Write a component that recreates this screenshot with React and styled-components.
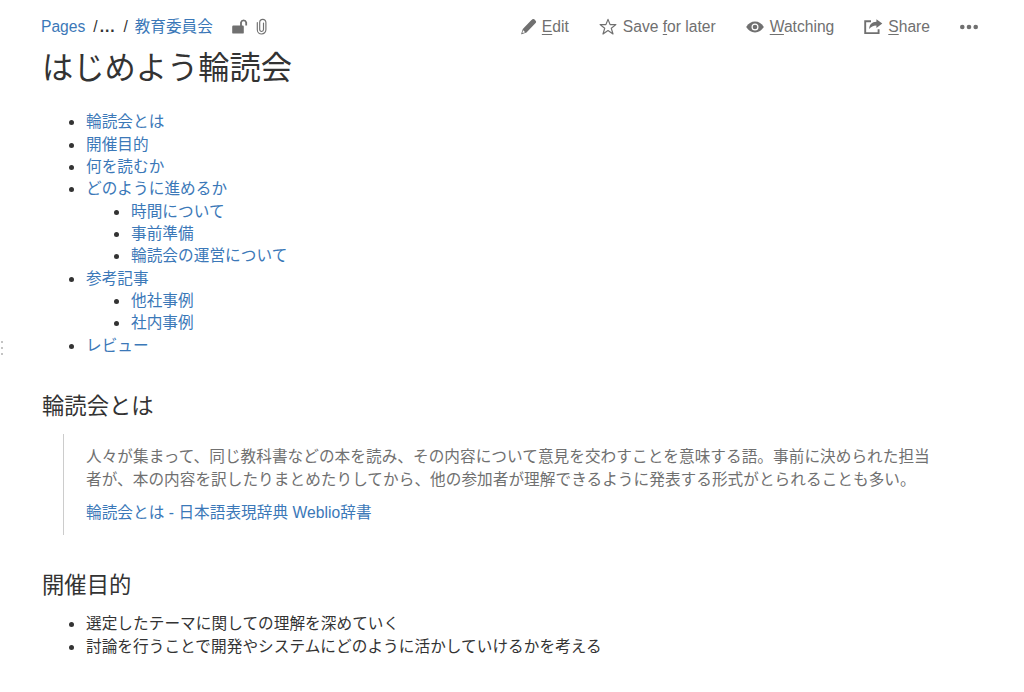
import styled, { createGlobalStyle } from 'styled-components';
import React from 'react';

const GlobalStyle = createGlobalStyle`
  body {
    margin: 0;
    background-color: #ffffff;
    color: #333333;
    font-family: "Liberation Sans", "Noto Sans CJK JP", sans-serif;
    font-size: 15.63px;
    line-height: 22.34px;
  }
`

const Page = styled.div`
  display: flex;
  height: 692px;
  overflow: hidden;
`

const SidebarHandle = styled.div`
  display: flex;
  flex-direction: column;
  justify-content: center;
  gap: 4px;
  width: 41px;
  padding-top: 4px;
  box-sizing: border-box;
  flex-shrink: 0;
`

const HandleDot = styled.span`
  width: 2px;
  height: 2px;
  margin-left: 1px;
  background-color: #c4c4c4;
`

const Main = styled.main`
  width: 937px;
`

const Header = styled.header`
  display: flex;
  justify-content: space-between;
  height: 22px;
  padding-top: 16px;
`

const Breadcrumbs = styled.nav`
  display: flex;
  align-items: center;
  white-space: pre;
`

const Link = styled.a`
  color: #3b78b8;
  text-decoration: none;
`

const Separator = styled.span`
  margin: ${(props) => props.$margin};
`

const Ellipsis = styled.span`
  font-weight: 700;
  letter-spacing: 0.9px;
`

const Toolbar = styled.div`
  display: flex;
  align-items: center;
`

const Action = styled.button`
  display: flex;
  align-items: center;
  gap: ${(props) => props.$gap || '6px'};
  margin-left: 30px;
  padding: 0;
  border: none;
  background: none;
  color: #707070;
  font: inherit;
  white-space: pre;
`

const Key = styled.span`
  text-decoration: underline;
  text-underline-offset: 2px;
  text-decoration-thickness: 1px;
  text-decoration-skip-ink: none;
`

const Icon = styled.svg`
  display: block;
  flex-shrink: 0;
  color: #707070;
  margin-left: ${(props) => props.$left || '0'};
`

const Title = styled.h1`
  margin: 12px 0 0 1px;
  font-size: 31.26px;
  font-weight: 400;
  line-height: 38px;
`

const Heading = styled.h2`
  margin: ${(props) => props.$top} 0 0 1px;
  font-size: 22.34px;
  font-weight: 400;
  line-height: 34px;
`

const List = styled.ul`
  margin: ${(props) => props.$top || '0'} 0 0;
  padding-left: 45px;
  list-style: none;
  letter-spacing: 0.06px;
`

const Item = styled.li`
  &::before {
    content: "";
    display: inline-block;
    width: 5px;
    height: 5px;
    margin: 0 12px 0 -17px;
    border-radius: 50%;
    background-color: #333333;
    vertical-align: 2px;
  }
`

const Quote = styled.blockquote`
  width: 885px;
  margin: 10px 0 0 22px;
  padding: 12.2px 0 10.2px 22px;
  border-left: 1px solid #cccccc;
  box-sizing: border-box;
  color: #707070;
  letter-spacing: 0.05px;
`

const Paragraph = styled.p`
  margin: 0 0 11.2px;

  &:last-child {
    margin-bottom: 0;
  }
`

const UnlockIcon = () => (
  <Icon $left='19px' width='16' height='18' viewBox='0 0 16 18'>
    <rect x='0.2' y='7.6' width='11.6' height='8' rx='1.2' fill='currentColor' />
    <path d='M9 8.5V4.4a2.7 2.7 0 0 1 5.2 0V7.4' fill='none' stroke='currentColor' strokeWidth='1.8' />
  </Icon>
)

const ClipIcon = () => (
  <Icon $left='8px' width='12' height='18' viewBox='0 0 12 18'>
    <path d='M1.3 4.5v7.2a4.3 4.3 0 0 0 8.6 0V4.4a3.1 3.1 0 0 0-6.2 0v7.2a1.9 1.9 0 0 0 3.8 0V5' fill='none' stroke='currentColor' strokeWidth='1.15' strokeLinecap='round' />
  </Icon>
)

const PencilIcon = () => (
  <Icon width='16' height='18' viewBox='0 0 16 18'>
    <path d='M10.2 2.3l1-.8c.8-.6 1.7-.6 2.4.1l1 1.1c.7.8.7 1.7 0 2.4l-9.1 9.4-4.8 1.7c-.4.1-.6-.1-.5-.5l1.6-4.7z' fill='currentColor' />
    <path d='M2.2 12.3l1.9 1.9-2.3.8-.4-.4z' fill='#ffffff' />
  </Icon>
)

const StarIcon = () => (
  <Icon width='18' height='18' viewBox='0 0 18 18'>
    <path d='M9 1.4l2.1 5.2h5.8l-4.6 3.7 1.7 5.7L9 12.6 4 16l1.7-5.7-4.6-3.7h5.8z' fill='none' stroke='currentColor' strokeWidth='1.2' strokeLinejoin='round' />
  </Icon>
)

const EyeIcon = () => (
  <Icon width='18' height='18' viewBox='0 0 18 18'>
    <path d='M.2 9C2.4 5.5 5.2 3.6 9 3.6S15.6 5.5 17.8 9c-2.2 3.5-5 5.4-8.8 5.4S2.4 12.5.2 9z' fill='currentColor' />
    <circle cx='9' cy='9' r='3.5' fill='#ffffff' />
    <circle cx='9' cy='9' r='2.3' fill='currentColor' />
  </Icon>
)

const ShareIcon = () => (
  <Icon width='19' height='18' viewBox='0 0 19 18'>
    <path d='M7 3.2H1.2v11.9h13.4v-3.8' fill='none' stroke='currentColor' strokeWidth='1.9' />
    <path d='M12.4 1.2l5.9 4.3-5.9 4.4V7.4c-3.3 0-5.3 1.1-7.2 3.7.1-4.5 2.7-7.1 7.2-7.3z' fill='currentColor' />
  </Icon>
)

const MoreIcon = () => (
  <Icon width='18' height='18' viewBox='0 0 18 18'>
    <circle cx='2.3' cy='9' r='2.3' fill='currentColor' />
    <circle cx='9' cy='9' r='2.3' fill='currentColor' />
    <circle cx='15.7' cy='9' r='2.3' fill='currentColor' />
  </Icon>
)

const contents = [
  { title: '輪読会とは' },
  { title: '開催目的' },
  { title: '何を読むか' },
  { title: 'どのように進めるか', children: ['時間について', '事前準備', '輪読会の運営について'] },
  { title: '参考記事', children: ['他社事例', '社内事例'] },
  { title: 'レビュー' },
]

const App = () => {
  return (
    <Page>
      <GlobalStyle />
      <SidebarHandle>
        <HandleDot />
        <HandleDot />
        <HandleDot />
      </SidebarHandle>
      <Main>
        <Header>
          <Breadcrumbs>
            <Link>Pages</Link>
            <Separator $margin='0 2px 0 8px'>/</Separator>
            <Ellipsis>...</Ellipsis>
            <Separator $margin='0 7px 0 8px'>/</Separator>
            <Link>教育委員会</Link>
            <UnlockIcon />
            <ClipIcon />
          </Breadcrumbs>
          <Toolbar>
            <Action $gap='5px'><PencilIcon /><span><Key>E</Key>dit</span></Action>
            <Action><StarIcon /><span>Save <Key>f</Key>or later</span></Action>
            <Action><EyeIcon /><span><Key>W</Key>atching</span></Action>
            <Action $gap='5px'><ShareIcon /><span><Key>S</Key>hare</span></Action>
            <Action><MoreIcon /></Action>
          </Toolbar>
        </Header>
        <Title>はじめよう輪読会</Title>
        <List $top='23.3px'>
          {contents.map((section) => (
            <Item key={section.title}>
              <Link>{section.title}</Link>
              {section.children && (
                <List>
                  {section.children.map((child) => (
                    <Item key={child}><Link>{child}</Link></Item>
                  ))}
                </List>
              )}
            </Item>
          ))}
        </List>
        <Heading $top='33px'>輪読会とは</Heading>
        <Quote>
          <Paragraph>
            人々が集まって、同じ教科書などの本を読み、その内容について意見を交わすことを意味する語。事前に決められた担当<br />
            者が、本の内容を訳したりまとめたりしてから、他の参加者が理解できるように発表する形式がとられることも多い。
          </Paragraph>
          <Paragraph><Link>輪読会とは - 日本語表現辞典 Weblio辞書</Link></Paragraph>
        </Quote>
        <Heading $top='34px'>開催目的</Heading>
        <List $top='10.5px'>
          <Item>選定したテーマに関しての理解を深めていく</Item>
          <Item>討論を行うことで開発やシステムにどのように活かしていけるかを考える</Item>
        </List>
      </Main>
    </Page>
  )
}

export default App;
